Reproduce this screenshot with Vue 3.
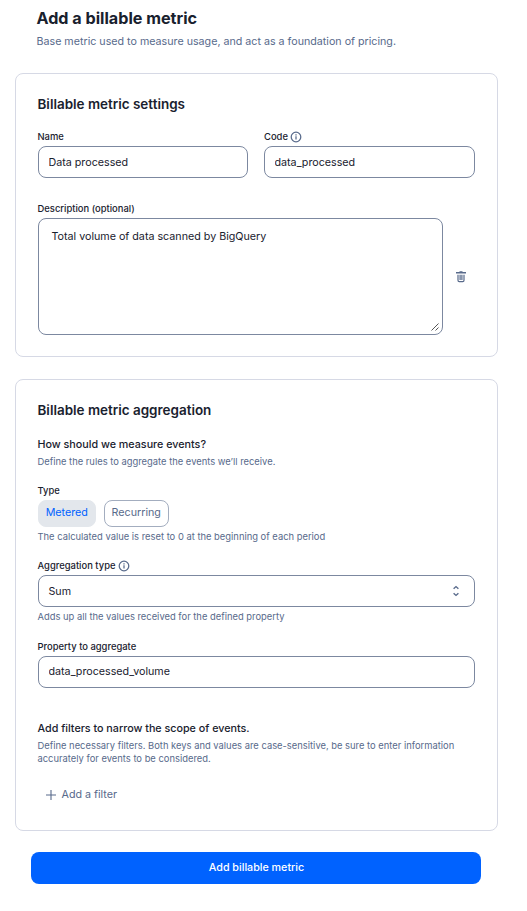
<script setup>
import { ref } from 'vue'

const name = ref('Data processed')
const code = ref('data_processed')
const description = ref('Total volume of data scanned by BigQuery')
const property = ref('data_processed_volume')
const types = ['Metered', 'Recurring']
const type = ref('Metered')
</script>

<template>
  <main class="page">
    <header class="intro">
      <h1>Add a billable metric</h1>
      <p>Base metric used to measure usage, and act as a foundation of pricing.</p>
    </header>

    <section class="card settings">
      <h2>Billable metric settings</h2>
      <div class="pair">
        <label class="field">
          <span class="label">Name</span>
          <input v-model="name" class="control" type="text" />
        </label>
        <label class="field">
          <span class="label code-label">Code
            <svg class="info" viewBox="0 0 12 12"><circle cx="6" cy="6" r="4.8" /><path d="M6 5.3v3.2M6 3.2v1.2" /></svg>
          </span>
          <input v-model="code" class="control" type="text" />
        </label>
      </div>
      <div class="description">
        <label class="field">
          <span class="label">Description (optional)</span>
          <span class="area-wrap">
            <textarea v-model="description" class="area"></textarea>
            <svg class="grip" viewBox="0 0 8 8"><path d="M.5 7.5l7-7M4.5 7.5l3-3" /></svg>
          </span>
        </label>
        <button class="trash" type="button" aria-label="Remove description">
          <svg viewBox="0 0 10 12"><path class="fill" d="M3.5 1V.2h3v.8H10v1.6H0V1z" /><path d="M2 3.8v5.4c0 1 .4 1.4 1.2 1.4h3.6c.8 0 1.2-.4 1.2-1.4V3.8M4.1 3.8v5.2M5.9 3.8v5.2" /></svg>
        </button>
      </div>
    </section>

    <section class="card aggregation">
      <h2>Billable metric aggregation</h2>
      <h3>How should we measure events?</h3>
      <p class="hint lead">Define the rules to aggregate the events we’ll receive.</p>

      <div class="label type-label">Type</div>
      <div class="toggles">
        <button
          v-for="t in types"
          :key="t"
          type="button"
          class="toggle"
          :class="{ active: t === type }"
          @click="type = t"
        >{{ t }}</button>
      </div>
      <p class="hint reset">The calculated value is reset to 0 at the beginning of each period</p>

      <div class="field agg-type">
        <span class="label">Aggregation type
          <svg class="info" viewBox="0 0 12 12"><circle cx="6" cy="6" r="4.8" /><path d="M6 5.3v3.2M6 3.2v1.2" /></svg>
        </span>
        <div class="control select">
          <span>Sum</span>
          <svg class="chevrons" viewBox="0 0 8 12"><path d="M1.6 3.8L4 1.6l2.4 2.2M1.6 8.2L4 10.4l2.4-2.2" /></svg>
        </div>
      </div>
      <p class="hint adds">Adds up all the values received for the defined property</p>

      <label class="field property">
        <span class="label">Property to aggregate</span>
        <input v-model="property" class="control" type="text" />
      </label>

      <h3 class="filters">Add filters to narrow the scope of events.</h3>
      <p class="hint rules">Define necessary filters. Both keys and values are case-sensitive, be sure to enter information accurately for events to be considered.</p>
      <button class="add-filter" type="button">
        <svg viewBox="0 0 10 10"><path d="M5 0v10M0 5h10" /></svg>
        <span>Add a filter</span>
      </button>
    </section>

    <button class="submit" type="button">Add billable metric</button>
  </main>
</template>

<style>
body {
  background: #fff;
}
</style>

<style scoped>
* {
  box-sizing: border-box;
}

.page {
  width: 527px;
  height: 911px;
  padding: 8px 29px 0 15px;
  overflow: hidden;
  color: #19212e;
  font-family: Inter, sans-serif;
  font-size: 10.71px;
}

h1, h2, h3, p {
  margin: 0;
}

button, input, textarea {
  font: inherit;
  letter-spacing: inherit;
}

.intro {
  height: 65px;
  padding-left: 21.5px;
}

h1 {
  font-size: 16.15px;
  font-weight: 700;
  line-height: 20px;
}

.intro p {
  margin-top: 6px;
  color: #586a8b;
  font-size: 10.69px;
  line-height: 16px;
}

.card {
  border: 1px solid #d6d9e5;
  border-radius: 8px;
  padding: 20px 22px 0 21.5px;
}

.settings {
  height: 284px;
}

.aggregation {
  height: 452px;
  margin-top: 22px;
}

h2 {
  font-size: 13.46px;
  font-weight: 600;
  line-height: 20px;
}

h3 {
  margin-top: 17px;
  font-size: 10.74px;
  font-weight: 500;
  line-height: 16px;
}

.field {
  display: flex;
  flex-direction: column;
}

.label {
  display: flex;
  align-items: center;
  gap: 3px;
  height: 14px;
  font-size: 9.42px;
  font-weight: 500;
  line-height: 14px;
}

.code-label {
  padding-left: 0.5px;
}

.info {
  width: 12px;
  height: 12px;
  margin: -1px 0 0 -0.5px;
  fill: none;
  stroke: #586a8b;
  stroke-width: 1.25;
}

.pair {
  display: grid;
  grid-template-columns: 210px 211px;
  gap: 16px;
  margin-top: 16px;
}

.control {
  width: 100%;
  height: 32px;
  margin-top: 2px;
  padding: 0 10px;
  border: 1px solid #7c88a0;
  border-radius: 8px;
  outline: none;
  background: #fff;
  color: #19212e;
}

.description {
  display: flex;
  align-items: flex-end;
  margin-top: 24px;
}

.area-wrap {
  position: relative;
  display: block;
  width: 405px;
  height: 117px;
  margin-top: 2px;
}

.area {
  display: block;
  width: 100%;
  height: 100%;
  padding: 10px 13px;
  border: 1px solid #7c88a0;
  border-radius: 8px;
  outline: none;
  resize: none;
  color: #19212e;
  line-height: 16px;
}

.grip {
  position: absolute;
  right: 4px;
  bottom: 4px;
  width: 8px;
  height: 8px;
  fill: none;
  stroke: #444;
  stroke-width: 0.9;
}

.trash {
  display: flex;
  align-items: center;
  justify-content: center;
  width: 37px;
  height: 117px;
  padding: 0 0 0 0.5px;
  border: 0;
  background: none;
}

.trash svg {
  flex: none;
  width: 10px;
  height: 12px;
  margin-left: 4px;
  fill: none;
  stroke: #586a8b;
  stroke-width: 1.2;
}

.trash .fill {
  fill: #586a8b;
  stroke: none;
}

.hint {
  color: #586a8b;
  font-size: 9.38px;
  line-height: 13px;
}

.lead {
  margin-top: 2px;
}

.type-label {
  margin-top: 16px;
}

.toggles {
  display: flex;
  gap: 8px;
  margin-top: 2px;
}

.toggle {
  width: 58px;
  height: 27px;
  padding: 0 0 2px 0.5px;
  border: 1px solid #a3adbf;
  border-radius: 8px;
  background: #fff;
  color: #586a8b;
}

.toggle + .toggle {
  width: 65px;
}

.toggle.active {
  border-color: #e3e7ec;
  background: #e3e7ec;
  color: #0062ff;
}

.reset {
  margin-top: 3px;
}

.agg-type {
  margin-top: 16px;
}

.select {
  display: flex;
  align-items: center;
  justify-content: space-between;
  padding-right: 14px;
}

.chevrons {
  width: 8px;
  height: 12px;
  fill: none;
  stroke: #586a8b;
  stroke-width: 1.4;
}

.adds {
  margin-top: 3px;
}

.property {
  margin-top: 17px;
}

.property .control {
  padding-bottom: 2px;
}

.filters {
  margin-top: 33px;
}

.rules {
  margin-top: 2px;
}

.add-filter {
  display: flex;
  align-items: center;
  gap: 6px;
  height: 26px;
  margin-top: 16px;
  padding: 0 8px;
  border: 0;
  background: none;
  color: #586a8b;
}

.add-filter svg {
  width: 10px;
  height: 10px;
  margin-top: 2px;
  stroke: #586a8b;
  stroke-width: 1.1;
}

.submit {
  display: block;
  width: 450px;
  height: 32px;
  margin: 21px 0 0 16px;
  padding: 0 0 2px 1px;
  border: 0;
  border-radius: 8px;
  background: #0062ff;
  color: #fff;
  font-weight: 500;
}
</style>
